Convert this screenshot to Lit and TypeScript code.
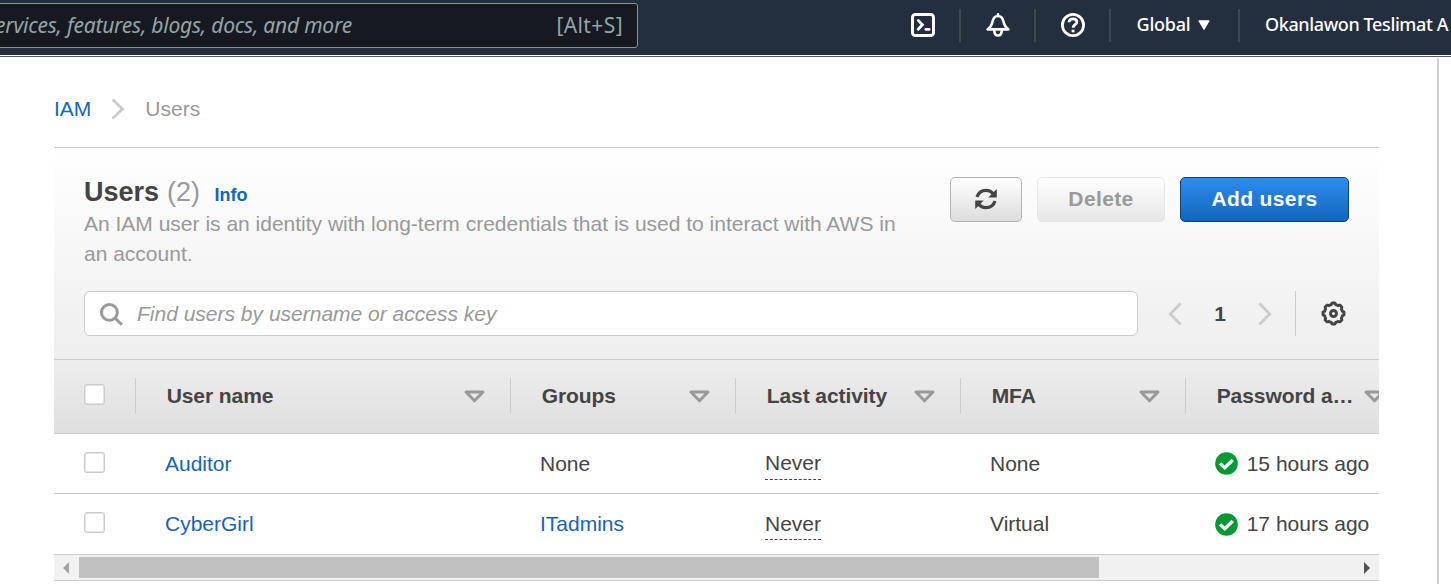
import { LitElement, html, css, svg } from "lit";
import { customElement } from "lit/decorators.js";

const columns = [
  { label: "User name", cls: "c-name" },
  { label: "Groups", cls: "c-col" },
  { label: "Last activity", cls: "c-col" },
  { label: "MFA", cls: "c-col" },
  { label: "Password a…", cls: "c-pass" },
];

const users = [
  { name: "Auditor", group: "None", linked: false, mfa: "None", age: "15 hours ago" },
  { name: "CyberGirl", group: "ITadmins", linked: true, mfa: "Virtual", age: "17 hours ago" },
];

@customElement("top-nav")
class TopNav extends LitElement {
  static styles = css`
    :host { display: block; height: 57px; overflow: hidden; font-family: "Noto Sans", sans-serif; }
    .bar { display: flex; height: 55px; background: #232f3e; color: #fff; }
    .rule { height: 1px; margin-top: 1px; background: #545b64; }
    .search { box-sizing: border-box; flex: none; display: flex; justify-content: space-between; align-items: center;
      width: 648px; height: 45px; margin: 3px 0 0 -10px; padding: 0 14px 2px 0;
      border: 1px solid #879596; border-radius: 3px; background: #16191f; color: #95a5a6; font-size: 21px; white-space: nowrap; }
    .hint { font-style: italic; letter-spacing: -0.22px; margin-left: 4px; }
    .key { letter-spacing: 0.4px; }
    .tools { display: flex; flex: none; margin: 9px 0 0 248px; height: 33px; }
    .tool { box-sizing: border-box; display: flex; align-items: center; justify-content: center; flex: none;
      width: 75px; border-right: 2px solid #414750; padding-bottom: 1px; }
    .region { width: 129px; font-size: 18px; font-weight: 500; gap: 8px; padding: 0 2px 3px 0; letter-spacing: -0.25px; }
    .region svg { margin-top: 2px; }
    .account { width: 240px; justify-content: flex-start; padding: 0 0 3px 25px; border: 0; font-size: 18px; font-weight: 500; white-space: nowrap; letter-spacing: -0.38px; }
    svg { display: block; flex: none; }
  `;

  render() {
    return html`
      <div class="bar">
        <div class="search"><span class="hint">ervices, features, blogs, docs, and more</span><span class="key">[Alt+S]</span></div>
        <div class="tools">
          <div class="tool">
            <svg width="24" height="24" viewBox="0 0 24 24" fill="none" stroke="#fff" stroke-width="3">
              <rect x="1.5" y="1.5" width="21" height="21" rx="2.8"></rect>
              <path d="M7.2 7.4 11.4 11.8 7.2 16.2" stroke-linecap="round" stroke-width="2.8"></path>
              <path d="M14.8 16.4H18.2" stroke-linecap="round" stroke-width="2.6"></path>
            </svg>
          </div>
          <div class="tool">
            <svg width="24" height="24" viewBox="0 0 24 24" fill="none" stroke="#fff" stroke-width="2.6" stroke-linejoin="round" stroke-linecap="round">
              <path d="M12 1.3V3M1.6 16.4H22.4C19.2 14.4 18.3 12.6 17.4 8.3C16.6 5 14.8 3 12 3S7.4 5 6.6 8.3C5.7 12.6 4.8 14.4 1.6 16.4Z"></path>
              <path d="M8.3 17.5C8.3 21 9.7 22.5 12 22.5S15.7 21 15.7 17.5"></path>
            </svg>
          </div>
          <div class="tool">
            <svg width="24" height="24" viewBox="0 0 24 24" fill="none" stroke="#fff" stroke-width="2.8">
              <circle cx="12" cy="12" r="10.6"></circle>
              <path d="M8.1 9.3C8.1 7 9.7 5.9 12 5.9S15.9 7.2 15.9 9C15.9 11.7 12.1 11.7 12.1 14.7"></path>
              <path d="M10.6 16.7H13.5V19.3H10.6Z" fill="#fff" stroke="none"></path>
            </svg>
          </div>
          <div class="tool region">Global
            <svg width="12" height="11" viewBox="0 0 12 11"><path d="M.8.8H11.2L6 9.6Z" fill="#fff" stroke="#fff" stroke-linejoin="round"></path></svg>
          </div>
          <div class="tool account">Okanlawon Teslimat A</div>
        </div>
      </div>
      <div class="rule"></div>
    `;
  }
}

@customElement("users-table")
class UsersTable extends LitElement {
  static styles = css`
    :host { display: block; overflow: hidden; color: #444; font-size: 21px; }
    .row, .head { box-sizing: border-box; display: flex; align-items: center; width: 1410px; border-bottom: 1px solid #ccc; }
    .head { height: 75px; padding-bottom: 2px; border-top: 1px solid #ccc; background: linear-gradient(#eee, #dfdfdf); font-weight: 700; letter-spacing: -0.08px; }
    .row { height: 60px; }
    .row.last { height: 61px; }
    .c-check, .c-name, .c-col, .c-pass { box-sizing: border-box; display: flex; align-items: center; flex: none; white-space: nowrap; }
    .c-check { width: 81px; padding-left: 30px; }
    .c-name { width: 375px; }
    .c-col { width: 225px; }
    .c-pass { width: 225px; }
    .row > * { padding-left: 30px; }
    .head > .th { height: 36px; border-left: 1px solid #ccc; padding: 0 25.5px 0 30.7px; justify-content: space-between; }
    .box { box-sizing: border-box; width: 21px; height: 21px; border: 1px solid #ccc; border-radius: 3px; background: #fff; box-shadow: inset 0 0 0 .5px #ccc; margin-bottom: 3px; }
    .link { color: #1d5fb8; }
    .dash { height: 31px; line-height: 30px; border-bottom: 1px dashed #444; margin-top: 3px; margin-bottom: 3px; }
    .last .dash { height: 30px; margin-top: 4px; margin-bottom: 4px; }
    .row .c-pass { padding-left: 30.2px; }
    svg.ok { margin-right: 8.5px; }
    svg { display: block; flex: none; }
    .th svg { margin-top: 1px; }
    .track { box-sizing: border-box; display: flex; align-items: center; height: 26px; padding: 0 9px; background: #f1f1f1; border-bottom: 1px solid #ccc; }
    .thumb { width: 1020px; height: 21px; margin: 0 265px 0 10px; background: #c1c1c1; }
  `;

  private check() {
    return svg`<svg class="ok" width="23" height="23" viewBox="0 0 23 23"><circle cx="11.5" cy="11.5" r="11.3" fill="#093"></circle><path d="M5.1 11.4 9.8 15.8 17.8 8" fill="none" stroke="#fff" stroke-width="3.3"></path></svg>`;
  }

  render() {
    return html`
      <div class="head">
        <div class="c-check"><span class="box"></span></div>
        ${columns.map((c) => html`<div class="th ${c.cls}"><span>${c.label}</span>
          <svg width="21" height="13" viewBox="0 0 21 13"><path d="M2 2H19L10.5 10.8Z" fill="none" stroke="#999" stroke-width="3" stroke-linejoin="round"></path></svg>
        </div>`)}
      </div>
      ${users.map((u, i) => html`<div class="row ${i === users.length - 1 ? "last" : ""}">
        <div class="c-check"><span class="box"></span></div>
        <div class="c-name link">${u.name}</div>
        <div class="c-col ${u.linked ? "link" : ""}">${u.group}</div>
        <div class="c-col"><span class="dash">Never</span></div>
        <div class="c-col">${u.mfa}</div>
        <div class="c-pass">${this.check()}${u.age}</div>
      </div>`)}
      <div class="track">
        <svg width="6" height="12" viewBox="0 0 6 12"><path d="M6 0V12L0 6Z" fill="#a3a3a3"></path></svg>
        <div class="thumb"></div>
        <svg width="6" height="12" viewBox="0 0 6 12"><path d="M0 0V12L6 6Z" fill="#505050"></path></svg>
      </div>
    `;
  }
}

@customElement("app-root")
class AppRoot extends LitElement {
  static styles = css`
    :host { display: flex; flex-direction: column; height: 584px; overflow: hidden; background: #fff;
      color: #444; font-family: "Liberation Sans", Arial, sans-serif; font-size: 21px; line-height: 30px; }
    .page { box-sizing: border-box; flex: 1; width: 1439px; margin-top: 1px; padding: 36px 58px 0 54px; border-right: 2px solid #ccd2d6; }
    .crumbs { display: flex; align-items: center; height: 30px; margin-bottom: 23px; color: #999; }
    .crumbs svg { margin: 0 20px 0 20px; }
    .link { color: #1166bb; }
    .panel { box-sizing: border-box; height: 212px; border-top: 1px solid #ccc; padding: 29px 30px 0; background: linear-gradient(#fff, #eee); }
    .top { display: flex; justify-content: space-between; height: 114px; }
    .title { display: flex; align-items: baseline; height: 32px; font-size: 27px; font-weight: 700; }
    .count { margin-left: 8px; color: #999; font-weight: 400; }
    .info { margin-left: 14.5px; font-size: 18px; color: #1166bb; }
    .desc { width: 830px; color: #999; }
    .buttons { display: flex; gap: 15px; }
    .btn { box-sizing: border-box; display: flex; align-items: center; justify-content: center; height: 45px; border-radius: 5px;
      font-weight: 700; letter-spacing: .375px; padding-bottom: 1px; }
    .refresh { width: 72px; border: 1px solid #b3b3b3; background: linear-gradient(#fff, #ddd); }
    .delete { width: 128px; border: 1px solid #e6e6e6; color: #999; background: linear-gradient(#fff, #e6e6e6); }
    .add { width: 169px; border: 1px solid #0f4074; color: #fff; background: linear-gradient(#2e8ded, #1166bb); }
    .filter { display: flex; align-items: center; }
    .find { box-sizing: border-box; display: flex; align-items: center; width: 1054px; height: 45px; border: 1px solid #ccc;
      border-radius: 6px; background: #fff; color: #999; font-style: italic; padding-left: 15px; }
    .find svg { margin: 1px 14px 0 0; }
    .prev { margin-left: 30px; }
    .num { width: 76px; text-align: center; font-weight: 700; }
    .split { width: 1px; height: 45px; background: #ccc; margin: 0 25px 0 23px; }
    svg { display: block; flex: none; }
  `;

  private gear() {
    const points: string[] = [];
    for (let i = 0; i <= 144; i++) {
      const a = (i / 144) * Math.PI * 2;
      const wave = Math.max(-0.7, Math.min(0.7, Math.cos(a * 8) * 1.4));
      const r = 9.8 + wave;
      points.push(`${(12.5 + r * Math.sin(a)).toFixed(2)},${(12.5 - r * Math.cos(a)).toFixed(2)}`);
    }
    return svg`<svg width="25" height="25" viewBox="0 0 25 25" fill="none" stroke="#444" stroke-width="2.9"><polygon points=${points.join(" ")}></polygon><circle cx="12.5" cy="12.5" r="3"></circle></svg>`;
  }

  render() {
    return html`
      <top-nav></top-nav>
      <div class="page">
        <div class="crumbs">
          <span class="link">IAM</span>
          <svg width="14" height="22" viewBox="0 0 14 22"><path d="M1.5 1.5 11.5 11 1.5 20.5" fill="none" stroke="#ccc" stroke-width="2.8"></path></svg>
          <span>Users</span>
        </div>
        <div class="panel">
          <div class="top">
            <div>
              <div class="title">Users<span class="count">(2)</span><span class="info">Info</span></div>
              <div class="desc">An IAM user is an identity with long-term credentials that is used to interact with AWS in an account.</div>
            </div>
            <div class="buttons">
              <div class="btn refresh">
                <svg width="24" height="24" viewBox="0 0 24 24" fill="none" stroke="#444" stroke-width="3.2">
                  <path d="M3 10C4.3 5.8 7.7 3.3 12 3.3C15 3.3 17.7 4.7 19.4 7"></path>
                  <path d="M22.8 2V10.5H14.3L17.2 7.6L20.2 4.6Z" fill="#444" stroke="none"></path>
                  <path d="M21 14C19.7 18.2 16.3 20.7 12 20.7C9 20.7 6.3 19.3 4.6 17"></path>
                  <path d="M1.2 22V13.5H9.7L6.8 16.4L3.8 19.4Z" fill="#444" stroke="none"></path>
                </svg>
              </div>
              <div class="btn delete">Delete</div>
              <div class="btn add">Add users</div>
            </div>
          </div>
          <div class="filter">
            <div class="find">
              <svg width="23" height="23" viewBox="0 0 23 23" fill="none" stroke="#999" stroke-width="3"><circle cx="9.4" cy="9.4" r="7.9"></circle><path d="M15 15 21.8 21.8"></path></svg>
              <span>Find users by username or access key</span>
            </div>
            <svg class="prev" width="14" height="24" viewBox="0 0 14 24"><path d="M12.5 1.5 2.3 12 12.5 22.5" fill="none" stroke="#ccc" stroke-width="2.8"></path></svg>
            <div class="num">1</div>
            <svg width="14" height="24" viewBox="0 0 14 24"><path d="M1.5 1.5 11.7 12 1.5 22.5" fill="none" stroke="#ccc" stroke-width="2.8"></path></svg>
            <div class="split"></div>
            ${this.gear()}
          </div>
        </div>
        <users-table></users-table>
      </div>
    `;
  }
}
